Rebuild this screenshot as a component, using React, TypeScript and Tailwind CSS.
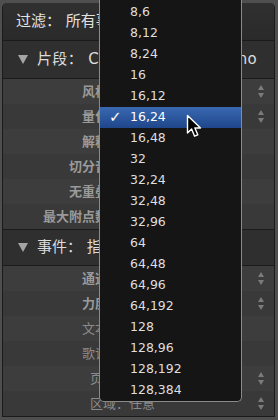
import React from 'react';

const items = [
  '8,6', '8,12', '8,24', '16', '16,12', '16,24', '16,48', '32', '32,24', '32,48',
  '32,96', '64', '64,48', '64,96', '64,192', '128', '128,96', '128,192', '128,384',
];

type RowProps = { label: string; strong?: boolean; stepper?: boolean; alt?: boolean; left?: boolean };

function Stepper() {
  return (
    <svg width="6" height="13" viewBox="0 0 6 13" className="text-[#7b7b7b]">
      <path d="M3 0 L6 5 L0 5 Z M0 8 L6 8 L3 13 Z" fill="currentColor" />
    </svg>
  );
}

function Triangle() {
  return (
    <svg width="10" height="9" viewBox="0 0 10 9" className="text-[#a5a5a5] shrink-0">
      <path d="M0 0 H10 L5 9 Z" fill="currentColor" />
    </svg>
  );
}

function Row({ label, strong, stepper, alt, left }: RowProps) {
  return (
    <div className={`h-[25px] flex items-center pr-[10px] ${alt ? 'bg-[#393939]' : 'bg-[#3d3d3d]'}`}>
      {left ? (
        <div className="pl-[87px] whitespace-nowrap text-[13px] text-[#8a8a8a]">{label}</div>
      ) : (
        <div
          className={`w-[118px] shrink-0 text-right whitespace-nowrap text-[13px] ${
            strong ? 'font-semibold text-[#9a9a9a]' : 'text-[#8a8a8a]'
          }`}
        >
          {label}
        </div>
      )}
      <div className="flex-1" />
      {stepper && <Stepper />}
    </div>
  );
}

export default function App() {
  return (
    <div className="relative w-[278px] h-[420px] overflow-hidden bg-[#4f4f4f] pl-[2px] pr-[3px] pt-[3px] font-['DejaVu_Sans','Noto_Sans_CJK_SC',sans-serif]">
      <div className="flex flex-col border-x border-b border-[#1b1b1b] rounded-t-[5px] overflow-hidden bg-[#3b3b3b]">
        {/* filter bar */}
        <div className="h-[38px] shrink-0 flex items-center pl-[13px] bg-gradient-to-b from-[#303030] to-[#2a2a2a] border-b border-[#1b1b1b] text-[15px] text-[#e2e2e2] whitespace-nowrap">
          过滤： 所有事件
        </div>

        {/* region section */}
        <div className="h-[38px] shrink-0 flex items-center gap-[9px] pl-[15px] bg-[#2f2f2f] border-b border-[#1b1b1b] text-[15px] text-[#dcdcdc] whitespace-nowrap">
          <Triangle />
          <span className="tracking-[0.35px]">片段： Classical Grand Piano</span>
        </div>
        <Row label="风格：" strong stepper />
        <Row label="量化：" strong stepper alt />
        <Row label="解释：" strong />
        <Row label="切分音：" strong alt />
        <Row label="无重叠：" strong />
        <Row label="最大附点数：" strong alt />

        {/* event section */}
        <div className="h-[37px] shrink-0 flex items-center gap-[9px] pl-[15px] bg-[#2f2f2f] border-y border-[#1b1b1b] text-[15px] text-[#dcdcdc] whitespace-nowrap">
          <Triangle />
          <span>事件： 指定区域</span>
        </div>
        <Row label="通道：" strong stepper />
        <Row label="力度：" strong stepper alt />
        <Row label="文本：" />
        <Row label="歌词：" alt />
        <Row label="页面： 全部" left stepper />
        <Row label="区域：任意" left stepper alt />
      </div>

      {/* popup menu */}
      <div className="absolute left-[99px] top-0 w-[143px] h-[402px] pt-[2px] bg-[#151515] border-x border-b border-[#8a8a8a] rounded-b-[5px] overflow-hidden font-['DejaVu_Sans',sans-serif] text-[12.5px]">
        {items.map((it) => {
          const sel = it === '16,24';
          return (
            <div
              key={it}
              className={`h-[21px] flex items-center ${
                sel ? 'bg-gradient-to-b from-[#3a69b2] to-[#1f468b] text-white' : 'text-[#dedede]'
              }`}
            >
              <span className="w-[30px] pl-[9px] text-[15px] font-bold leading-none">{sel ? '✓' : ''}</span>
              <span>{it}</span>
            </div>
          );
        })}
      </div>

      {/* mouse pointer */}
      <svg className="absolute left-[186px] top-[114px]" width="17" height="24" viewBox="0 0 17 24">
        <path
          d="M1.5 1.5 V19 L5.6 15 L8.6 22.2 L11.8 20.8 L8.9 14 H14.5 Z"
          fill="#000"
          stroke="#fff"
          strokeWidth="1.4"
          strokeLinejoin="round"
        />
      </svg>
    </div>
  );
}
